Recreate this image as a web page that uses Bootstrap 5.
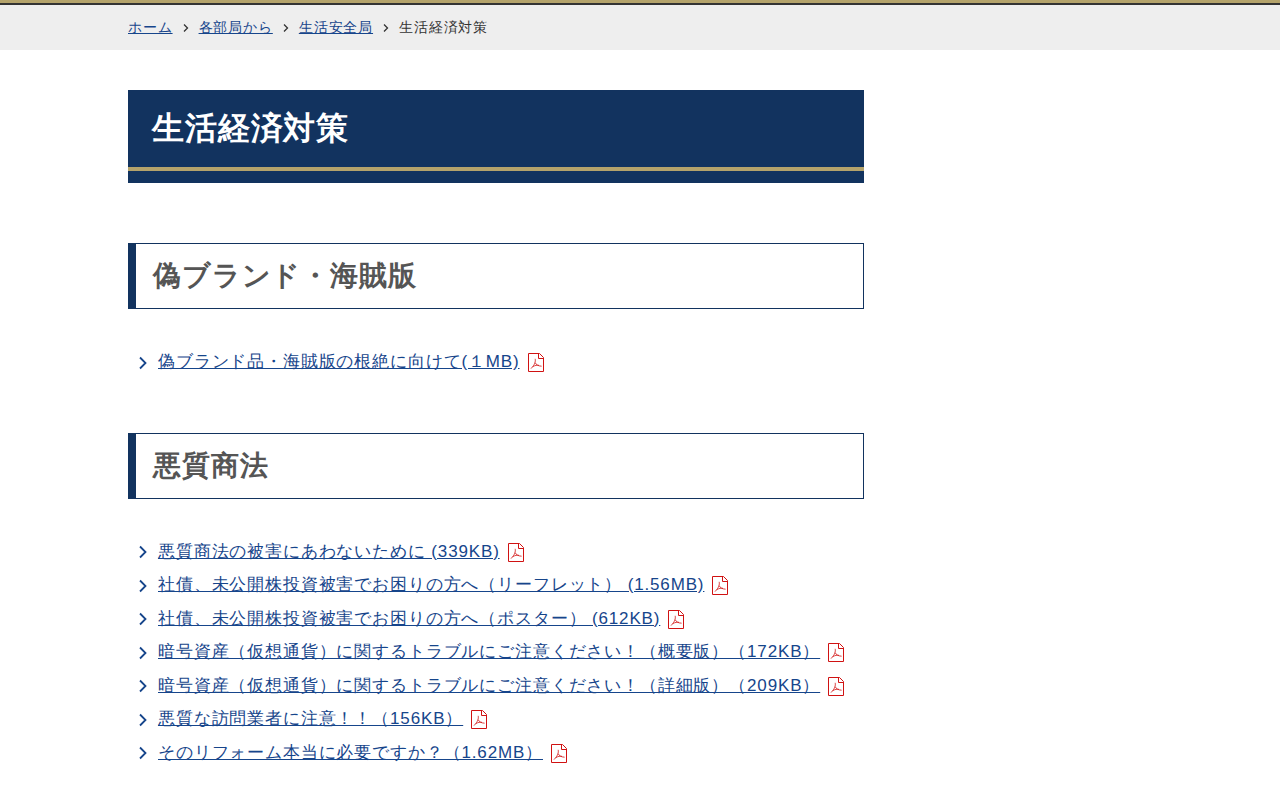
<!DOCTYPE html>
<html lang="ja">
<head>
<meta charset="utf-8">
<meta name="viewport" content="width=device-width, initial-scale=1">
<title>生活経済対策</title>
<link href="https://cdn.jsdelivr.net/npm/bootstrap@5.3.0/dist/css/bootstrap.min.css" rel="stylesheet">
<style>
body{font-family:"Liberation Sans",sans-serif;font-size:17px;line-height:1.5;letter-spacing:.05em;color:#333}
a{color:#16458b}
a:hover{color:#12335f}
.page-width{width:80%;margin-inline:auto}
.site-top{border-top:3px solid #b4a36b;background:#eee}
.site-top nav{border-top:2px solid #333}
.crumbs{font-size:14px;line-height:21px;padding:12px 0}
.crumbs svg{width:6px;height:10px;margin:0 10px}
.main-col{padding-top:40px;padding-right:32px}
.page-title{background:#12335f;color:#fff;font-size:32px;line-height:45px;font-weight:700;padding-bottom:12px;margin-bottom:60px}
.page-title span{display:block;padding:16px 24px;border-bottom:4px solid #b4a36b}
.section-title{font-size:28px;line-height:40px;font-weight:700;color:#555;border:1px solid #12335f;border-left-width:8px;padding:12px 17px;margin-bottom:36px}
.doc-section{margin-bottom:54px}
.doc-list li{display:flex;align-items:center;padding:4px 0 4px 11px}
.doc-list .arrow{width:8px;height:14px;margin:2px 11px 0 0;flex:none}
.doc-list .pdf{width:17px;height:19px;margin:2px 0 0 8px;flex:none}
</style>
</head>
<body>
<svg class="d-none" aria-hidden="true">
<symbol id="arrow" viewBox="0 0 8 14"><path d="M1 1.5 6.5 7 1 12.5" fill="none" stroke="#16458b" stroke-width="1.8"/></symbol>
<symbol id="crumb" viewBox="0 0 6 10"><path d="M1 1.5 4.5 5 1 8.5" fill="none" stroke="#333" stroke-width="1.3"/></symbol>
<symbol id="pdf" viewBox="0 0 17 19"><g fill="none" stroke="#d01212"><path d="M.5.5H11.5L15.5 4.5V18.5H.5ZM10.5.5V5.5H15.5"/><path stroke-width=".8" d="M7.2 5.8C7.6 8.6 7.2 11.2 3 15.6M7.3 9.8C8.2 11.8 10 13 13.6 13.2M4.8 13.6C7 12.4 9 12 11 12.3"/></g></symbol>
</svg>
<header class="site-top">
<nav aria-label="パンくずリスト">
<ol class="crumbs page-width list-unstyled d-flex flex-wrap align-items-center mb-0">
<li><a href="#">ホーム</a><svg aria-hidden="true"><use href="#crumb"/></svg></li>
<li><a href="#">各部局から</a><svg aria-hidden="true"><use href="#crumb"/></svg></li>
<li><a href="#">生活安全局</a><svg aria-hidden="true"><use href="#crumb"/></svg></li>
<li aria-current="page">生活経済対策</li>
</ol>
</nav>
</header>
<div class="page-width">
<div class="row g-0">
<main class="col-9 main-col">
<h1 class="page-title"><span>生活経済対策</span></h1>
<section class="doc-section">
<h2 class="section-title">偽ブランド・海賊版</h2>
<ul class="doc-list list-unstyled mb-0">
<li><svg class="arrow" aria-hidden="true"><use href="#arrow"/></svg><a href="#">偽ブランド品・海賊版の根絶に向けて(１MB)</a><svg class="pdf" role="img" aria-label="PDF"><use href="#pdf"/></svg></li>
</ul>
</section>
<section class="doc-section">
<h2 class="section-title">悪質商法</h2>
<ul class="doc-list list-unstyled mb-0">
<li><svg class="arrow" aria-hidden="true"><use href="#arrow"/></svg><a href="#">悪質商法の被害にあわないために (339KB)</a><svg class="pdf" role="img" aria-label="PDF"><use href="#pdf"/></svg></li>
<li><svg class="arrow" aria-hidden="true"><use href="#arrow"/></svg><a href="#">社債、未公開株投資被害でお困りの方へ（リーフレット） (1.56MB)</a><svg class="pdf" role="img" aria-label="PDF"><use href="#pdf"/></svg></li>
<li><svg class="arrow" aria-hidden="true"><use href="#arrow"/></svg><a href="#">社債、未公開株投資被害でお困りの方へ（ポスター） (612KB)</a><svg class="pdf" role="img" aria-label="PDF"><use href="#pdf"/></svg></li>
<li><svg class="arrow" aria-hidden="true"><use href="#arrow"/></svg><a href="#">暗号資産（仮想通貨）に関するトラブルにご注意ください！（概要版）（172KB）</a><svg class="pdf" role="img" aria-label="PDF"><use href="#pdf"/></svg></li>
<li><svg class="arrow" aria-hidden="true"><use href="#arrow"/></svg><a href="#">暗号資産（仮想通貨）に関するトラブルにご注意ください！（詳細版）（209KB）</a><svg class="pdf" role="img" aria-label="PDF"><use href="#pdf"/></svg></li>
<li><svg class="arrow" aria-hidden="true"><use href="#arrow"/></svg><a href="#">悪質な訪問業者に注意！！（156KB）</a><svg class="pdf" role="img" aria-label="PDF"><use href="#pdf"/></svg></li>
<li><svg class="arrow" aria-hidden="true"><use href="#arrow"/></svg><a href="#">そのリフォーム本当に必要ですか？（1.62MB）</a><svg class="pdf" role="img" aria-label="PDF"><use href="#pdf"/></svg></li>
</ul>
</section>
</main>
</div>
</div>
<script src="https://cdn.jsdelivr.net/npm/bootstrap@5.3.0/dist/js/bootstrap.bundle.min.js"></script>
</body>
</html>
